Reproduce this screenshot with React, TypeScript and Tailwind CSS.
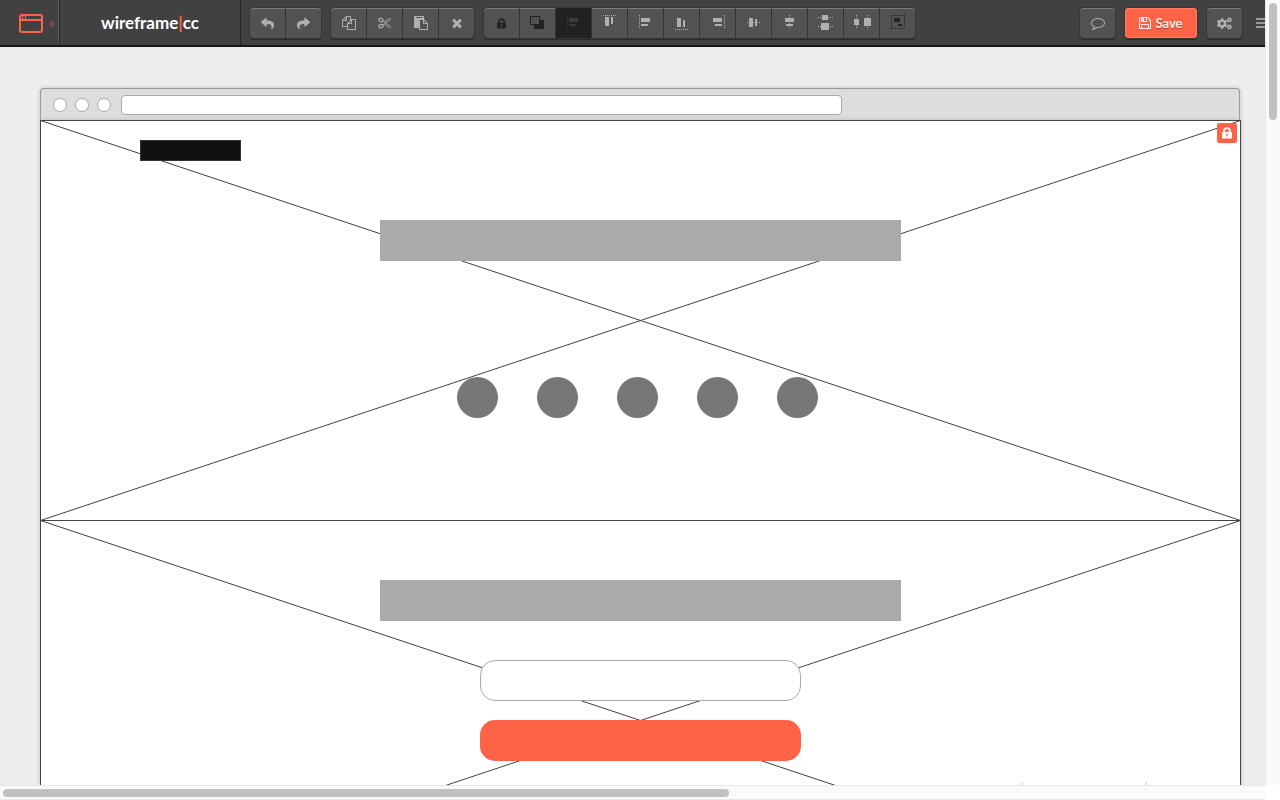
import type { ReactNode } from "react";
import { FaCogs, FaReply, FaShare } from "react-icons/fa";

type Box = [x: number, y: number, w: number, h: number];
type Dots = [x1: number, y1: number, x2: number, y2: number];

function AlignIcon({ boxes, dots }: { boxes: Box[]; dots: Dots[] }) {
  return (
    <svg width="35" height="30" viewBox="0 0 35 30" shapeRendering="crispEdges" aria-hidden="true">
      {dots.map(([x1, y1, x2, y2], i) => (
        <line key={i} x1={x1} y1={y1} x2={x2} y2={y2} stroke="currentColor" strokeDasharray="1 1" />
      ))}
      {boxes.map(([x, y, width, height], i) => (
        <rect key={i} x={x} y={y} width={width} height={height} fill="currentColor" />
      ))}
    </svg>
  );
}

function CopyIcon() {
  return (
    <svg width="14" height="14" viewBox="0 0 1792 1792" fill="currentColor" aria-hidden="true">
      <path d="M1696 384q40 0 68 28t28 68v1216q0 40-28 68t-68 28h-960q-40 0-68-28t-28-68v-288h-544q-40 0-68-28t-28-68v-672q0-40 20-88t48-76l408-408q28-28 76-48t88-20h416q40 0 68 28t28 68v328q68-40 128-40h416zm-544 213l-299 299h299v-299zm-640-384l-299 299h299v-299zm196 647l316-316v-416h-384v416q0 40-28 68t-68 28h-416v640h512v-256q0-40 20-88t48-76zm956 804v-1152h-384v416q0 40-28 68t-68 28h-416v640h896z" />
    </svg>
  );
}

function PasteIcon() {
  return (
    <svg width="14" height="14" viewBox="0 0 1792 1792" fill="currentColor" aria-hidden="true">
      <path d="M768 1664h896v-640h-416q-40 0-68-28t-28-68v-416h-384v1152zm256-1440v-64q0-13-9.5-22.5t-22.5-9.5h-704q-13 0-22.5 9.5t-9.5 22.5v64q0 13 9.5 22.5t22.5 9.5h704q13 0 22.5-9.5t9.5-22.5zm256 672h299l-299-299v299zm512 128v672q0 40-28 68t-68 28h-960q-40 0-68-28t-28-68v-160h-544q-40 0-68-28t-28-68v-1344q0-40 28-68t68-28h1088q40 0 68 28t28 68v328q21 13 36 28l408 408q28 28 48 76t20 88z" />
    </svg>
  );
}

function CutIcon() {
  return (
    <svg width="14" height="12" viewBox="0 0 14 12" fill="none" stroke="currentColor" aria-hidden="true">
      <ellipse cx="3" cy="2.9" rx="2.2" ry="1.6" transform="rotate(25 3 2.9)" strokeWidth="1.2" />
      <ellipse cx="3" cy="9.1" rx="2.2" ry="1.6" transform="rotate(-25 3 9.1)" strokeWidth="1.2" />
      <path d="M5 4 7.2 5.6 12.8 9.8 11.4 10.4 6 7M5 8 7.2 6.4 12.8 2.2 11.4 1.6 6 5" strokeWidth="0.8" />
    </svg>
  );
}

function DeleteIcon() {
  return (
    <svg width="14" height="14" viewBox="0 0 1792 1792" fill="currentColor" aria-hidden="true">
      <path d="M1490 1322q0 40-28 68l-136 136q-28 28-68 28t-68-28l-294-294-294 294q-28 28-68 28t-68-28l-136-136q-28-28-28-68t28-68l294-294-294-294q-28-28-28-68t28-68l136-136q28-28 68-28t68 28l294 294 294-294q28-28 68-28t68 28l136 136q28 28 28 68t-28 68l-294 294 294 294q28 28 28 68z" />
    </svg>
  );
}

function CommentIcon() {
  return (
    <svg width="14" height="14" viewBox="0 0 1792 1792" fill="currentColor" aria-hidden="true">
      <path d="M896 384q-204 0-381.5 69.5t-282 187.5-104.5 255q0 112 71.5 213.5t201.5 175.5l87 50-27 96q-24 91-70 172 152-63 275-171l43-38 57 6q69 8 130 8 204 0 381.5-69.5t282-187.5 104.5-255-104.5-255-282-187.5-381.5-69.5zm896 512q0 174-120 321.5t-326 233-450 85.5q-70 0-145-8-198 175-460 242-49 14-114 22h-5q-15 0-27-10.5t-16-27.5v-1q-3-4-.5-12t2-10 4.500-9.5l6-9 7-8.5 8-9q7-8 31-34.5t34.5-38 31-39.5 32.5-51 27-59 26-76q-157-89-247.5-220t-90.5-281q0-174 120-321.5t326-233 450-85.5 450 85.5 326 233 120 321.5z" />
    </svg>
  );
}

function SaveIcon() {
  return (
    <svg width="12" height="12" viewBox="128 128 1536 1536" fill="currentColor" aria-hidden="true">
      <path d="M512 1536h768v-384h-768v384zm896 0h128v-896q0-14-10-38.5t-20-34.5l-281-281q-10-10-34-20t-39-10v416q0 40-28 68t-68 28h-576q-40 0-68-28t-28-68v-416h-128v1280h128v-416q0-40 28-68t68-28h832q40 0 68 28t28 68v416zm-384-928v-320q0-13-9.5-22.5t-22.5-9.5h-192q-13 0-22.5 9.5t-9.5 22.5v320q0 13 9.5 22.5t22.5 9.5h192q13 0 22.5-9.5t9.5-22.5zm640 32v928q0 40-28 68t-68 28h-1344q-40 0-68-28t-28-68v-1344q0-40 28-68t68-28h928q40 0 88 20t76 48l280 280q28 28 48 76t20 88z" />
    </svg>
  );
}

function LockIcon({ className }: { className: string }) {
  return (
    <svg className={className} viewBox="0 0 10 12" aria-hidden="true">
      <path
        fill="currentColor"
        fillRule="evenodd"
        d="M1.2 5V4a3.8 3.8 0 0 1 7.6 0v1h.4q.8 0 .8.8v4.9q0 .8-.8.8H.8q-.8 0-.8-.8V5.8q0-.8.8-.8zM3 5h4V4a2 2 0 0 0-4 0zM4.4 6.600v3h1.200v-3z"
      />
    </svg>
  );
}

function LayersIcon() {
  return (
    <svg width="35" height="30" viewBox="0 0 35 30" shapeRendering="crispEdges" aria-hidden="true">
      <rect x="14" y="12" width="10" height="9" fill="currentColor" />
      <rect x="10.5" y="8.5" width="9" height="8" fill="#525252" stroke="currentColor" />
    </svg>
  );
}

type Tool = { label: string; icon: ReactNode; tone?: "dark" | "active" };

const history: Tool[] = [
  { label: "Undo", icon: <FaReply size={13} /> },
  { label: "Redo", icon: <FaShare size={13} /> },
];

const clipboard: Tool[] = [
  { label: "Copy", icon: <CopyIcon /> },
  { label: "Cut", icon: <CutIcon /> },
  { label: "Paste", icon: <PasteIcon /> },
  { label: "Delete", icon: <DeleteIcon /> },
];

const arrange: Tool[] = [
  { label: "Lock", icon: <LockIcon className="h-[11px] w-[9px]" />, tone: "dark" },
  { label: "Order", icon: <LayersIcon />, tone: "dark" },
  {
    label: "Snap",
    tone: "active",
    icon: <AlignIcon dots={[[11.5, 7, 11.5, 21]]} boxes={[[13, 10, 9, 4], [13, 16, 7, 2]]} />,
  },
  {
    label: "Align top",
    icon: <AlignIcon dots={[[11, 7.5, 24, 7.5]]} boxes={[[13, 9, 4, 9], [19, 9, 2, 7]]} />,
  },
  {
    label: "Align left",
    icon: <AlignIcon dots={[[11.5, 7, 11.5, 21]]} boxes={[[13, 10, 9, 4], [13, 16, 7, 2]]} />,
  },
  {
    label: "Align bottom",
    icon: <AlignIcon dots={[[11, 21.5, 24, 21.5]]} boxes={[[13, 10, 4, 9], [19, 12, 2, 7]]} />,
  },
  {
    label: "Align right",
    icon: <AlignIcon dots={[[24.5, 7, 24.5, 21]]} boxes={[[13, 10, 9, 4], [15, 16, 7, 2]]} />,
  },
  {
    label: "Align middle",
    icon: <AlignIcon dots={[[11, 14.5, 24, 14.5]]} boxes={[[13, 10, 4, 9], [19, 11, 2, 7]]} />,
  },
  {
    label: "Align center",
    icon: <AlignIcon dots={[[17.5, 7, 17.5, 21]]} boxes={[[13, 10, 9, 4], [14, 16, 7, 2]]} />,
  },
  {
    label: "Distribute vertically",
    icon: (
      <AlignIcon
        dots={[[10, 9.5, 25, 9.5], [10, 18.5, 25, 18.5]]}
        boxes={[[14, 7, 6, 5], [13, 15, 8, 7]]}
      />
    ),
  },
  {
    label: "Distribute horizontally",
    icon: (
      <AlignIcon
        dots={[[12.5, 7, 12.5, 21], [23.5, 7, 23.5, 21]]}
        boxes={[[10, 11, 5, 6], [20, 10, 7, 8]]}
      />
    ),
  },
  {
    label: "Group",
    tone: "dark",
    icon: (
      <AlignIcon
        dots={[[11, 7.5, 25, 7.5], [11, 20.5, 25, 20.5], [11.5, 7, 11.5, 21], [24.5, 7, 24.5, 21]]}
        boxes={[[14, 10, 6, 4], [18, 16, 4, 2]]}
      />
    ),
  },
];

const toneClass = {
  normal: "bg-[#525252] text-[#b0b0b0] shadow-[inset_0_1px_0_#7c7c7c]",
  dark: "bg-[#525252] text-[#222222] shadow-[inset_0_1px_0_#7c7c7c]",
  active: "bg-[#212121] text-[#3c3c3c]",
};

function ToolGroup({ tools, label }: { tools: Tool[]; label: string }) {
  return (
    <div
      role="group"
      aria-label={label}
      className="flex h-[30px] shrink-0 gap-px rounded-[4px] bg-[#353535] shadow-[0_0_0_1px_#353535,0_2px_1px_#2a2a2a]"
    >
      {tools.map(({ label: name, icon, tone }) => (
        <button
          key={name}
          type="button"
          aria-label={name}
          className={`flex w-[35px] items-center justify-center overflow-hidden first:rounded-l-[4px] last:rounded-r-[4px] ${toneClass[tone ?? "normal"]}`}
        >
          {icon}
        </button>
      ))}
    </div>
  );
}

function Toolbar() {
  return (
    <header className="-mr-[5px] flex h-[47px] items-stretch border-b-2 border-[#141414] bg-[#414141]">
      <a
        href="#new"
        aria-label="Browser window"
        className="flex w-[60px] shrink-0 items-center gap-[7px] border-r border-[#282828] pl-[19px] shadow-[inset_-1px_0_0_#5c5c5c]"
      >
        <svg width="24" height="19" viewBox="0 0 24 19" fill="none" stroke="#ff6347" className="mt-[2px]" aria-hidden="true">
          <rect x="1" y="1" width="22" height="17" rx="2" strokeWidth="2" />
          <path d="M1 6h22" strokeWidth="2" />
          <path d="M3.5 2v3M6.5 2v3" strokeWidth="1" />
        </svg>
        <svg width="6" height="8" viewBox="0 0 6 8" fill="#7d473d" className="mt-[2px]" aria-hidden="true">
          <path d="M0 0l6 4-6 4z" />
        </svg>
      </a>
      <a
        href="#home"
        className="flex w-[181px] shrink-0 items-center justify-center border-r border-[#282828] text-[17px] leading-5 font-bold text-white"
      >
        wireframe<span className="text-[#ff6347]">|</span>cc
      </a>
      <div className="flex items-start gap-[10px] pt-2 pl-[9px]">
        <ToolGroup tools={history} label="History" />
        <ToolGroup tools={clipboard} label="Clipboard" />
        <ToolGroup tools={arrange} label="Arrange" />
      </div>
      <div className="ml-auto flex shrink-0 items-start gap-[10px] pt-2">
        <ToolGroup tools={[{ label: "Comments", icon: <CommentIcon /> }]} label="Comments" />
        <button
          type="button"
          className="flex h-[30px] w-[72px] items-center justify-center gap-1 rounded-[4px] bg-[#ff6347] text-[13px] leading-5 font-bold text-white/90 shadow-[inset_0_0_0_1px_#ff7d65,0_0_0_1px_#373737,0_2px_1px_#2a2a2a] text-shadow-[0_1px_1px_#a04030]"
        >
          <SaveIcon />
          Save
        </button>
        <ToolGroup tools={[{ label: "Settings", icon: <FaCogs size={15} /> }]} label="Settings" />
        <button type="button" aria-label="Menu" className="flex h-[30px] items-center pl-1">
          <svg width="14" height="10" viewBox="0 0 14 10" fill="#999999" aria-hidden="true">
            <path d="M0 0h14v2H0zM0 4h14v2H0zM0 8h14v2H0z" />
          </svg>
        </button>
      </div>
    </header>
  );
}

function BrowserChrome() {
  return (
    <div className="flex h-8 items-center gap-2 rounded-t-[4px] border border-b-0 border-[#999999] bg-[#dddddd] px-3 shadow-[0_0_4px_#bbbbbb]">
      <span className="size-[14px] rounded-full border border-[#aaaaaa] bg-white" />
      <span className="size-[14px] rounded-full border border-[#aaaaaa] bg-white" />
      <span className="size-[14px] rounded-full border border-[#aaaaaa] bg-white" />
      <input
        type="text"
        aria-label="Address"
        className="ml-[2px] h-5 w-[721px] rounded-[4px] border border-[#aaaaaa] bg-white px-2 text-xs outline-none"
      />
    </div>
  );
}

function CrossedBox({ className }: { className: string }) {
  return (
    <svg className={className} width="1201" height="401" viewBox="0 0 1201 401" fill="none" stroke="#444444" aria-hidden="true">
      <rect x="0.5" y="0.5" width="1200" height="400" fill="#ffffff" />
      <path d="M0.5 0.5l1200 400M1200.5 0.5l-1200 400" />
    </svg>
  );
}

/* Shapes placed freely on the drawing canvas, offset from its top left corner. */
function Canvas() {
  return (
    <main aria-label="Canvas" className="relative h-[801px] w-[1201px] bg-white shadow-[0_0_4px_#bbbbbb]">
      <CrossedBox className="absolute top-0 left-0" />
      <CrossedBox className="absolute top-[400px] left-0" />
      <div className="absolute top-5 left-[100px] h-[21px] w-[101px] border border-[#333333] bg-[#111111]" />
      <div className="absolute top-[100px] left-[340px] h-[41px] w-[521px] bg-[#aaaaaa]" />
      <div className="absolute top-[257px] left-[417px] flex gap-[39px]">
        {[1, 2, 3, 4, 5].map((n) => (
          <div key={n} className="size-[41px] rounded-full bg-[#777777]" />
        ))}
      </div>
      <div className="absolute top-[460px] left-[340px] h-[41px] w-[521px] bg-[#aaaaaa]" />
      <div className="absolute top-[540px] left-[440px] h-[41px] w-[321px] rounded-[15px] border border-[#aaaaaa] bg-white" />
      <div className="absolute top-[600px] left-[440px] h-[41px] w-[321px] rounded-[15px] bg-[#ff6347]" />
      <div className="absolute top-[662px] left-[982px] h-5 w-[125px] border-x border-[#cccccc]" />
      <button
        type="button"
        aria-label="Unlock"
        className="absolute top-[3px] left-[1177px] flex size-5 items-center justify-center rounded-[2px] bg-[#ff6347] text-white"
      >
        <LockIcon className="h-3 w-[10px]" />
      </button>
    </main>
  );
}

export default function App() {
  return (
    <div className="grid h-screen grid-cols-[minmax(0,1fr)_15px] grid-rows-[minmax(0,1fr)_15px] overflow-hidden bg-white font-['Lato',sans-serif]">
      <div className="overflow-hidden bg-[#eeeeee]">
        <Toolbar />
        <div className="pt-[41px] pl-10">
          <div className="w-[1200px]">
            <BrowserChrome />
            <Canvas />
          </div>
        </div>
      </div>
      <div className="border-l border-[#e7e7e7] bg-[#fafafa] pt-[3px] pl-[3px]">
        <div className="h-[117px] w-2 rounded-full bg-[#c1c1c1]" />
      </div>
      <div className="border-y border-[#e7e7e7] bg-[#fafafa] pt-[3px] pl-[3px]">
        <div className="h-2 w-[726px] rounded-full bg-[#c1c1c1]" />
      </div>
    </div>
  );
}
